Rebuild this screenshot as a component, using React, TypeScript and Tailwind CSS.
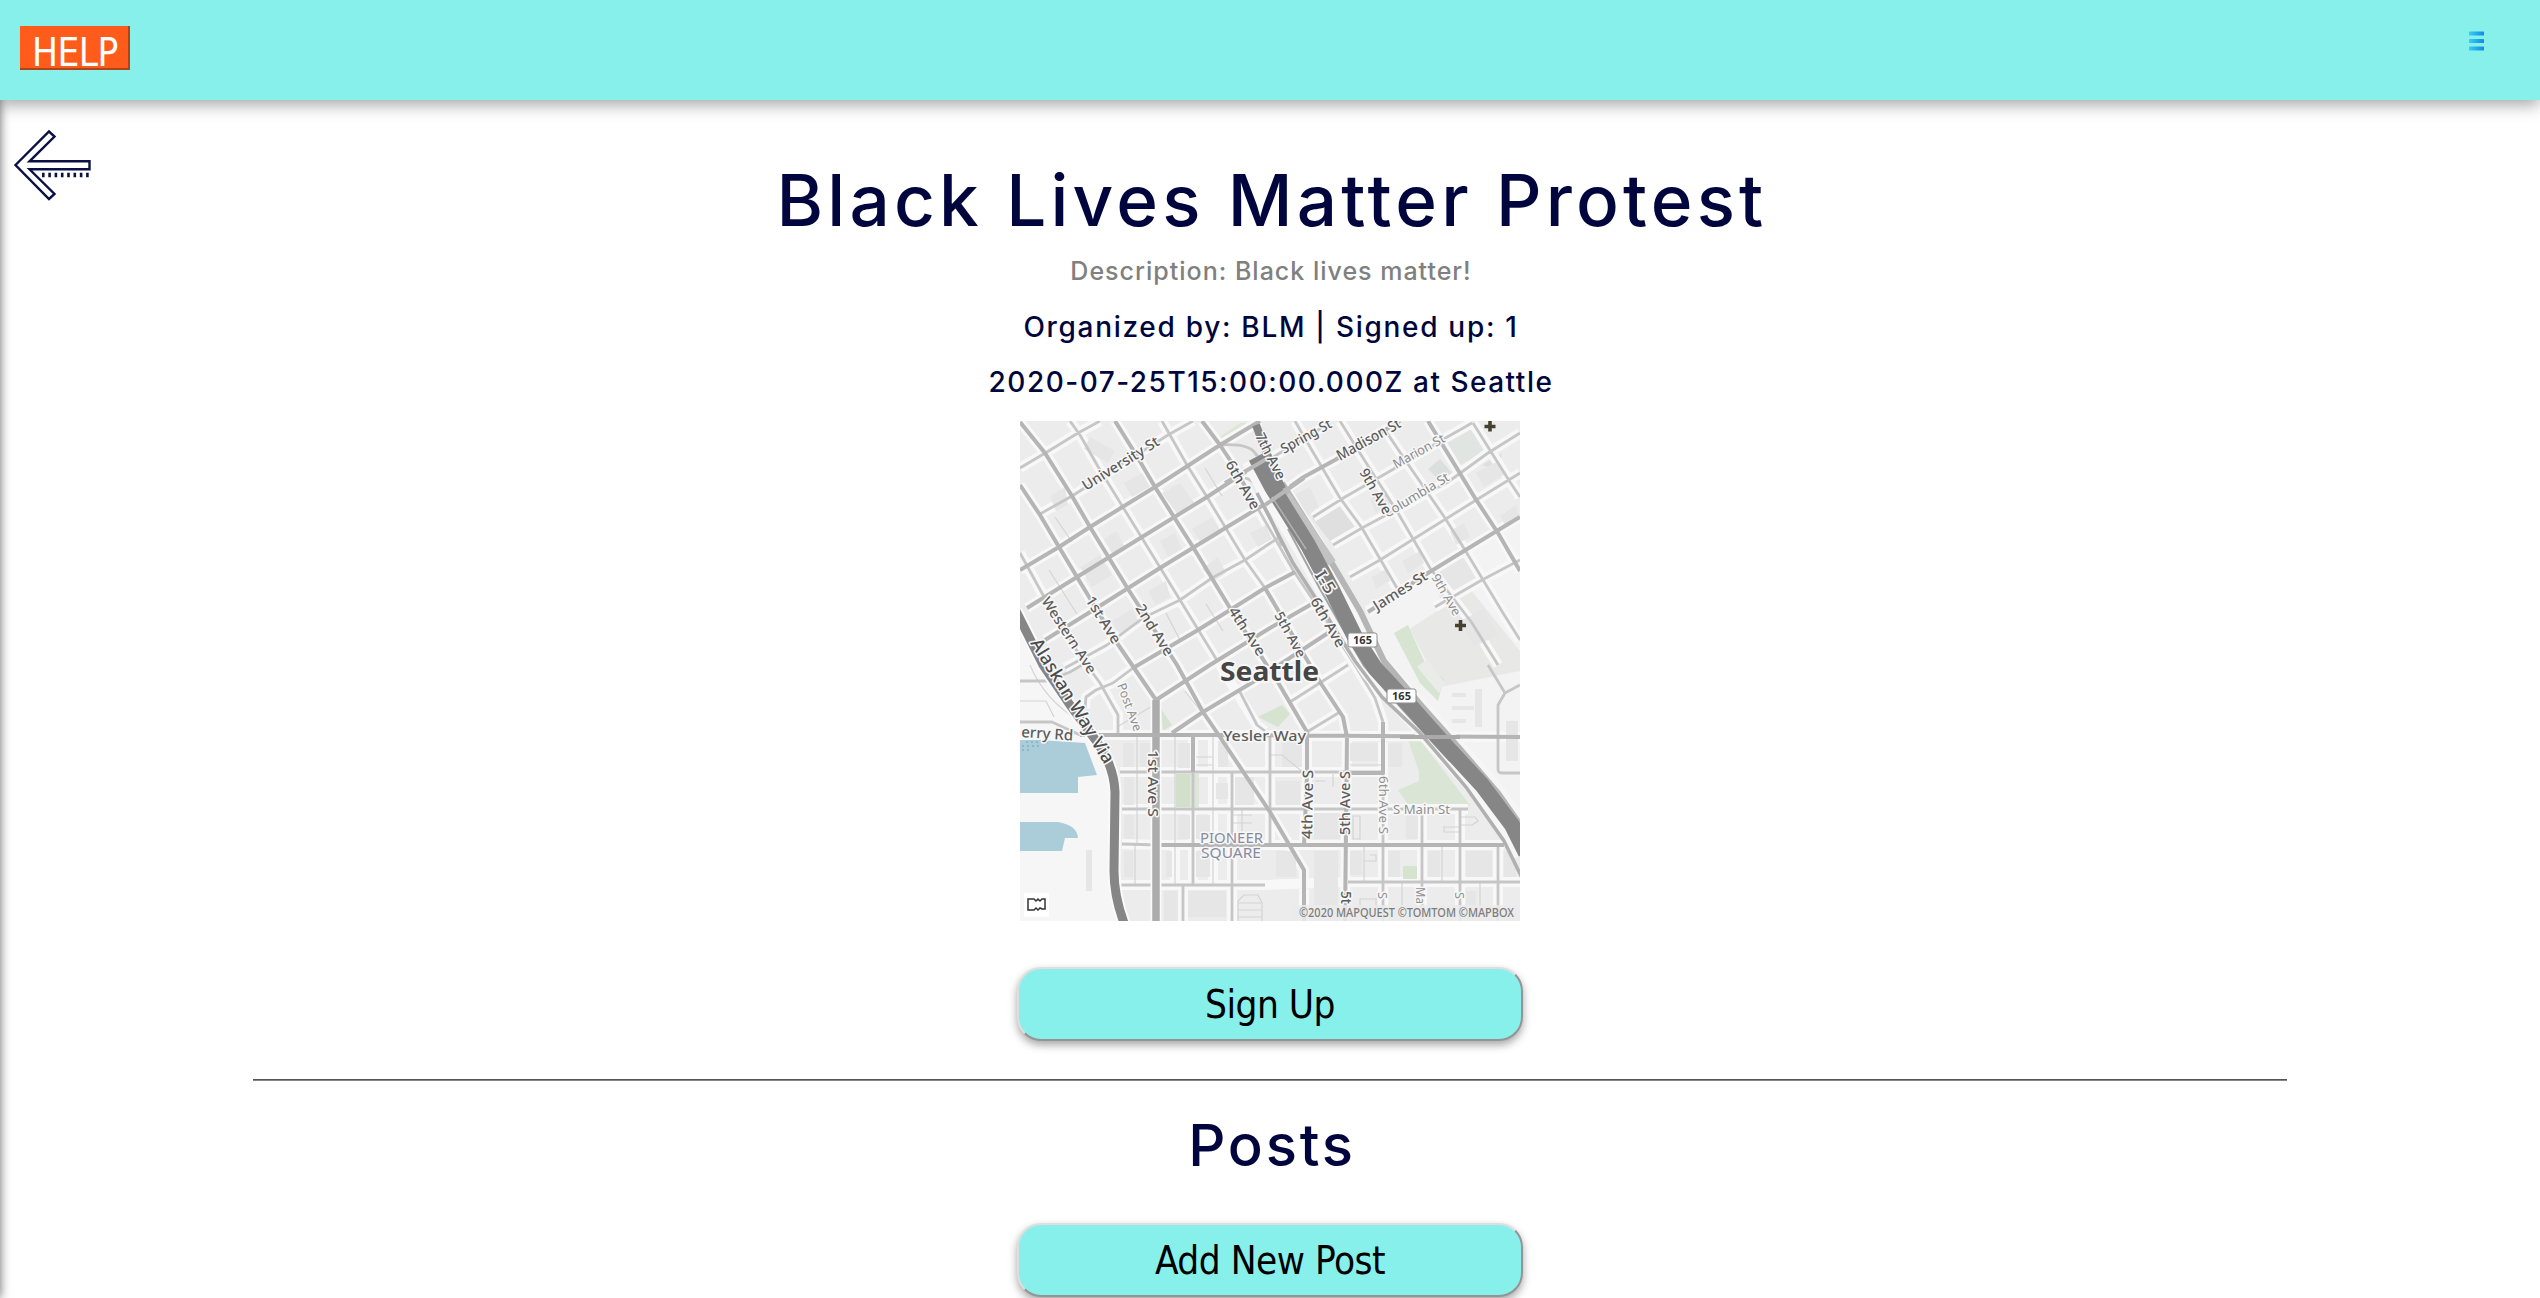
const casings = [
  // avenues, running down to the right
  "M0 1L25 32L52 75L70 106L108 168L157 244L183 291L200 316L250 391L284 449V500",
  "M0 64L20 94L39 126L57 156L97 222L136 279",
  "M50 0L60 14L80 49L122 117L160 179L198 241L237 304L245 310",
  "M95 0L115 32L135 66L173 126L210 187L259 263L287 311V354L284 424",
  "M142 0L167 44L187 76L225 139L245 167L300 261L323 296L327 316L325 500",
  "M182 0L200 24L210 39L237 86L273 149L295 182L335 244L355 277L363 301V352",
  "M0 132L23 174L60 235L80 262L98 294V314",
  "M275 0L290 26L320 77L342 107L377 167",
  "M320 0L338 29L378 92L410 147",
  "M410 147L452 202L478 244",
  "M365 9L392 49L425 97L445 129L483 192L500 219",
  "M408 0L455 77L478 112L500 150",
  "M453 2L468 26L490 61L500 76",
  // streets, running up to the right
  "M0 47L27 31L58 12L80 0",
  "M20 93L52 75L148 14L173 0",
  "M0 149L39 126L70 106L135 66L200 24L240 0",
  "M7 187L57 156L122 116L187 76L213 59L250 38L310 2",
  "M25 219L75 188L140 147L207 106L250 80L282 57L315 39L380 0",
  "M45 247L87 224L123 197L160 179L192 157L225 139L258 117",
  "M65 287L66 276L76 269L93 262L113 247L178 209L210 189L245 167L275 151",
  "M136 279L190 244L250 207L297 180",
  "M152 312L183 291L233 261L308 212",
  "M293 96L325 76L372 49L422 19L452 2",
  "M313 124L342 107L428 61L468 32L500 12",
  "M330 156L360 139L392 119L453 81L500 52",
  "M348 191L408 152L475 111L500 96",
  "M415 186L462 159L500 139",
  "M270 281L328 244",
  "M287 311L320 291",
  // the square grid of Pioneer Square
  "M60 314H200L500 316",
  "M100 351H363",
  "M102 388H448",
  "M102 423L140 424H484",
  "M100 464H245L325 461H500",
  "M155 424V464", "M173 316V464", "M193 316V464", "M212 351V500", "M250 316V424",
  "M363 352V500", "M402 388V500", "M440 388V500", "M478 424V500", "M163 464V500",
]

const majorRoads = [
  "M0 1L25 32L52 75L70 106L108 168L157 244L183 291L200 316L250 391L284 449V500",
  "M0 64L20 94L39 126L57 156L97 222L136 279",
  "M95 0L115 32L135 66L173 126L210 187L259 263L287 311V354L284 424",
  "M182 0L200 24L210 39L237 86",
  "M245 167L300 261L323 296L327 316L325 500",
  "M0 149L39 126L70 106L135 66L200 24L240 0",
  "M25 219L75 188L140 147L207 106L250 80L282 57L315 39L380 0",
  "M7 187L57 156L122 116L187 76L213 59",
  "M113 247L178 209L210 189L245 167L275 151",
  "M136 279L190 244L250 207L297 180",
  "M152 312L183 291L233 261L308 212",
  "M408 0L455 77L478 112L500 150",
  "M348 191L408 152L475 111L500 96",
  "M60 314H200L500 316",
  "M140 424H484",
  "M327 352H363V301",
  "M173 316V351",
]

const minorStreets = [
  "M50 0L60 14L80 49L122 117L160 179L198 241",
  "M220 271L237 304L245 310",
  "M142 0L167 44L187 76L225 139L245 167",
  "M237 86L273 149L295 182L335 244L355 277L363 301",
  "M0 132L23 174L60 235L80 262L98 294V314",
  "M275 0L290 26L320 77L342 107L377 167",
  "M320 0L338 29L378 92L410 147L452 202L478 244",
  "M365 9L392 49L425 97L445 129L483 192L500 219",
  "M453 2L468 26L490 61L500 76",
  "M0 47L27 31L58 12L80 0",
  "M20 93L52 75L148 14L173 0",
  "M213 59L250 38L310 2",
  "M45 247L87 224L123 197L160 179L192 157L225 139L258 117",
  "M65 287L66 276L76 269L93 262L113 247",
  "M293 96L325 76L372 49L422 19L452 2",
  "M313 124L342 107L428 61L468 32L500 12",
  "M330 156L360 139L392 119L453 81L500 52",
  "M415 186L462 159L500 139",
  "M270 281L328 244",
  "M287 311L320 291",
  "M100 351H363",
  "M102 388H448",
  "M102 423L140 424",
  "M100 464H245M328 461H500",
  "M173 351V464", "M212 351V500", "M250 316V424", "M163 464V500",
  "M363 352V500", "M402 388V500", "M440 388V500", "M478 424V500",
  "M0 260H28L50 251L62 244",
  "M0 301H32L60 314",
  "M468 244L485 272L500 264M485 272L478 284V348Q478 352 482 352H500",
  "M200 24Q228 22 235 32L245 44",
  "M225 57Q238 60 243 78L262 125",
]

const alleys = [
  "M29 149L57 193", "M35 96L52 121", "M185 47L202 75", "M186 183L203 210", "M146 192L160 219",
  "M117 316V424", "M155 316V464", "M193 316V464", "M10 244Q25 280 60 300", "M0 280H26L34 296",
  "M115 424V464", "M176 336H193M176 344H193", "M212 394H232M212 402H232M222 388V410",
  "M218 500V480L224 474H238L242 482V500M218 482H242M218 489H242M218 496H242",
  "M344 424V461", "M422 424V461", "M382 461V490", "M460 461V495", "M340 478H356V488H340Z",
  "M330 344H362", "M313 353V366M295 360H305", "M440 396H455L458 400L452 404H440M440 406H424V411H440",
  "M250 334H262L284 352", "M333 395H340V418H333Z", "M344 440H356V434H350", "M165 270L188 300", "M97 306L134 284",
]

const buildings = [
  "M70 16L95 30L88 42L64 28Z", "M104 62L122 52L130 66L112 76Z", "M30 75L45 66L48 84L36 90Z", "M84 118L96 110L106 128L94 136Z",
  "M142 72L160 62L176 84L158 94Z", "M140 120L155 112L162 128L148 136Z", "M172 108L192 96L202 112L182 124Z", "M182 148L198 136L206 152L194 160Z",
  "M60 146L80 134L92 154L72 166Z", "M92 200L112 188L120 202L100 214Z", "M128 170L146 160L150 176L136 184Z", "M230 112L246 104L252 118L238 126Z",
  "M276 73L290 66L299 86L286 96Z", "M350 78L366 70L372 82L356 92Z", "M382 140L400 130L404 142L388 152Z", "M430 110L444 102L450 116L436 124Z",
  "M352 156L366 148L370 160L356 168Z", "M456 52L478 40L484 54L464 66Z", "M480 95L496 84L500 98L486 106Z", "M440 200L464 188L478 214L454 226Z",
  "M103 322H114V346H103Z", "M120 322H130V346H120Z", "M158 322H170V347H158Z", "M198 320H208V346H198Z", "M104 356H114V384H104Z", "M196 362H208V378H196Z",
  "M104 394H114V418H104Z", "M158 394H170V418H158Z", "M176 394H190V418H176Z", "M104 430H113V456H104Z", "M146 430H152V456H146Z", "M176 430H190V456H176Z",
  "M168 470H206V496H168Z", "M144 470H158V500H144Z", "M256 360H280V384H256Z", "M294 392H320V418H294Z", "M294 430H318V484H294Z", "M330 430H342V454H330Z",
  "M368 430H380V456H368Z", "M408 430H420V456H408Z", "M446 430H472V456H446Z", "M368 322H382V346H368Z", "M330 322H358V340H330Z", "M262 320H282V346H262Z",
  "M386 394H398V418H386Z", "M446 470H456V486H446Z", "M484 430H496V456H484Z", "M66 429H72V470H66Z", "M215 356H234V384H215Z", "M256 430H276V456H256Z",
  "M486 300H498V340H486Z", "M432 272H446V276H432Z", "M432 285H454V289H432Z", "M432 298H446V302H432Z", "M455 268H462V306H455Z",
]

type Label = { text: string; x: number; y: number; rotate?: number; size: number; width: number; color?: string; weight?: number }

const labels: Label[] = [
  { text: "University St", x: 66, y: 70, rotate: -32, size: 14.5, width: 88 },
  { text: "6th Ave", x: 205, y: 43, rotate: 60, size: 14.5, width: 54 },
  { text: "7th Ave", x: 235, y: 15, rotate: 63, size: 14, width: 50 },
  { text: "Spring St", x: 264, y: 33, rotate: -29, size: 14, width: 56 },
  { text: "Madison St", x: 320, y: 40, rotate: -29, size: 15, width: 71 },
  { text: "Marion St", x: 376, y: 48, rotate: -29, size: 13, width: 57, color: "#8a8a8a", weight: 400 },
  { text: "Columbia St", x: 367, y: 97, rotate: -31, size: 13, width: 74, color: "#8a8a8a", weight: 400 },
  { text: "9th Ave", x: 339, y: 51, rotate: 60, size: 14, width: 50 },
  { text: "James St", x: 357, y: 190, rotate: -32, size: 14.5, width: 61 },
  { text: "9th Ave", x: 411, y: 156, rotate: 60, size: 12.5, width: 46, color: "#909090", weight: 400 },
  { text: "I-5", x: 294, y: 154, rotate: 58, size: 17, width: 24 },
  { text: "6th Ave", x: 290, y: 180, rotate: 60, size: 14.5, width: 55 },
  { text: "5th Ave", x: 254, y: 194, rotate: 61, size: 13.5, width: 50 },
  { text: "4th Ave", x: 208, y: 190, rotate: 57, size: 14.5, width: 55 },
  { text: "Western Ave", x: 21, y: 180, rotate: 57, size: 14, width: 88 },
  { text: "1st Ave", x: 65, y: 179, rotate: 58, size: 14.5, width: 53 },
  { text: "2nd Ave", x: 115, y: 187, rotate: 58, size: 14.5, width: 58 },
  { text: "Alaskan Way Via", x: 10, y: 222, rotate: 58.5, size: 18, width: 143, color: "#4c4c4c" },
  { text: "Post Ave", x: 97, y: 264, rotate: 70, size: 12.5, width: 50, color: "#909090", weight: 400 },
  { text: "erry Rd", x: 1, y: 316, rotate: 4, size: 15, width: 52 },
  { text: "Yesler Way", x: 203, y: 320, size: 14.5, width: 83 },
  { text: "1st Ave S", x: 128, y: 329, rotate: 90, size: 15, width: 67 },
  { text: "4th Ave S", x: 292, y: 418, rotate: -89, size: 14.5, width: 69 },
  { text: "5th Ave S", x: 330, y: 414, rotate: -90, size: 14.5, width: 64 },
  { text: "6th Ave S", x: 359, y: 355, rotate: 90, size: 13, width: 58, color: "#909090", weight: 400 },
  { text: "S Main St", x: 373, y: 393, size: 12.5, width: 57, color: "#909090", weight: 400 },
  { text: "5t", x: 321, y: 470, rotate: 90, size: 14, width: 13 },
  { text: "S", x: 358, y: 471, rotate: 90, size: 12.5, width: 7, color: "#909090", weight: 400 },
  { text: "Ma", x: 396, y: 466, rotate: 90, size: 12.5, width: 17, color: "#909090", weight: 400 },
  { text: "S", x: 435, y: 471, rotate: 90, size: 12.5, width: 7, color: "#909090", weight: 400 },
  { text: "PIONEER", x: 180, y: 422, size: 15, width: 63, color: "#888ba0", weight: 400 },
  { text: "SQUARE", x: 181, y: 437, size: 15, width: 60, color: "#888ba0", weight: 400 },
]

const shields = [
  { x: 328, y: 212 },
  { x: 367, y: 268 },
]

const freeway = "M236 36L252 66L288 124L312 169L335 216L355 247L392 287L425 324L462 364L492 404L506 432"

function SeattleMap() {
  return (
    <svg className="block size-[500px]" viewBox="0 0 500 500" fill="none" fontFamily="'Noto Sans', sans-serif">
      <rect width="500" height="500" fill="#ececec" />
      <path d="M0 196L25 240L90 340L96 500H0Z" fill="#f6f6f6" />
      <path d="M345 185L500 95V420L425 324L355 247Z" fill="#f3f3f3" />

      {/* Hospital and park areas */}
      <path d="M390 208L450 168L500 230V250L420 266Z" fill="#e8e8e7" />
      <path d="M292 97L325 77L340 104L312 123Z" fill="#dfdfdf" />
      <path d="M415 152L444 136L460 158L420 178Z" fill="#e6e6e6" />
      <path d="M408 48L420 38L432 52L424 64Z" fill="#dce0dc" />
      <path d="M424 22L450 8L468 30L440 44Z" fill="#e1e5e1" />
      <path d="M482 32L478 50L462 44Z" fill="#dbe2db" />
      <path d="M374 212L388 204L406 244L424 258L418 280L400 262Z" fill="#d7e4d1" />
      <path d="M397 246L407 238L425 262L419 272Z" fill="#eaece9" />
      <path d="M388 319L400 319L450 384L440 389H392L378 369L399 360V350Z" fill="#dae5d6" />
      <path d="M141 288L152 304L143 310Z" fill="#d6e3d0" />
      <path d="M238 296L262 284L270 293L258 306Z" fill="#d6e3d0" />
      <path d="M198 17L220 2H238L200 22Z" fill="#dce7d8" />

      {/* Elliott Bay piers */}
      <path d="M0 319L20 319L65 322L77 354L58 356V372H0Z" fill="#abcdda" />
      <path d="M0 401H38Q57 404 58 417L45 417L42 430H0Z" fill="#abcdda" />
      <path d="M2 325H20M6 321H30M2 329H10" stroke="#7fb0c8" strokeWidth="1.5" strokeDasharray="2 3" />

      <path d={casings.join("")} stroke="#f8f8f8" strokeWidth="10" strokeLinejoin="round" />
      <path d={buildings.join("")} fill="#e6e6e6" />
      <path d="M156 353H179V386H156Z" fill="#dde6d9" />
      <path d="M156 353H170V386H156Z" fill="#d2e0cb" />
      <path d="M383 445H397V458H383Z" fill="#d5e3cf" />
      <path d={alleys.join("")} stroke="#d4d4d4" strokeWidth="1.2" />
      <path d={minorStreets.join("")} stroke="#c6c6c6" strokeWidth="2.8" strokeLinejoin="round" />
      <path d={majorRoads.join("")} stroke="#b5b5b5" strokeWidth="4" strokeLinejoin="round" />
      <path d="M136 279V500" stroke="#fafafa" strokeWidth="11" />
      <path d="M136 279V500" stroke="#acacac" strokeWidth="7.5" />
      <path d="M100 314H170" stroke="#b0b0b0" strokeWidth="4" />

      {/* Alaskan Way viaduct */}
      <path d="M-4 190L23 244L50 284L77 321Q94 345 95 371L94 450Q94 475 104 502" stroke="#fafafa" strokeWidth="13" />
      <path d="M-4 190L23 244L50 284L77 321Q94 345 95 371L94 450Q94 475 104 502" stroke="#868686" strokeWidth="9" />

      {/* Interstate 5 and its ramps */}
      <path d={freeway} stroke="#f6f6f6" strokeWidth="31" strokeLinejoin="round" />
      <path d="M262 62L300 122L340 190L364 240L400 283L440 328L478 372L506 412" stroke="#b5b5b5" strokeWidth="6" />
      <path d="M266 74L312 142" stroke="#c2c2c2" strokeWidth="9" />
      <path d="M237 72L273 142L300 184L335 240L362 276L400 312L446 366L484 420L506 465" stroke="#b0b0b0" strokeWidth="3.5" />
      <path d="M268 108L300 168L344 245L384 290L430 340" stroke="#a5a5a5" strokeWidth="2" />
      <path d="M236 4L252 46L262 68" stroke="#868686" strokeWidth="8" />
      <path d={freeway} stroke="#868686" strokeWidth="16" strokeLinejoin="round" />
      <path d="M252 76L286 128" stroke="#b0b0b0" strokeWidth="1.5" />
      <path d="M205 62L250 36M245 84L284 57" stroke="#b7b7b7" strokeWidth="4" />
      <path d="M380 316H440" stroke="#aaaaaa" strokeWidth="4" />

      {labels.map((label, i) => (
        <text
          key={i}
          x={label.x}
          y={label.y}
          transform={`rotate(${label.rotate ?? 0} ${label.x} ${label.y})`}
          fontSize={label.size}
          fontWeight={label.weight ?? 500}
          textLength={label.width}
          lengthAdjust="spacingAndGlyphs"
          fill={label.color ?? "#5c5c5c"}
          stroke="#f7f7f7"
          strokeWidth="3"
          strokeLinejoin="round"
          paintOrder="stroke"
        >
          {label.text}
        </text>
      ))}
      <text x="200" y="260" fontSize="27" fontWeight="700" textLength="99" lengthAdjust="spacingAndGlyphs" fill="#454545" stroke="#f7f7f7" strokeWidth="4" paintOrder="stroke">
        Seattle
      </text>

      {shields.map((shield) => (
        <g key={shield.x}>
          <rect x={shield.x} y={shield.y} width="29" height="14" rx="2" fill="#fff" stroke="#8d8d8d" />
          <text x={shield.x + 5} y={shield.y + 11} fontSize="11" fontWeight="700" textLength="19" fill="#333">
            165
          </text>
        </g>
      ))}
      <path d="M470 0V10.500M464.500 5.500H475.500M440.500 199V210M435 204.500H446" stroke="#46402f" strokeWidth="3.600" />

      {/* Provider mark and attribution */}
      <rect x="4" y="472" width="25" height="24" fill="#fff" />
      <path d="M8 478H14L16 480L18 478L20 480L22 478H25V488H22L20 487L18 489L16 487L14 489H8Z" stroke="#333" strokeWidth="1.500" />
      <rect x="272" y="484" width="228" height="16" fill="#ebebeb" fillOpacity=".85" />
      <text x="279" y="496" fontSize="12.500" fontWeight="500" textLength="215" lengthAdjust="spacingAndGlyphs" fill="#7c7c7c">
        ©2020 MAPQUEST ©TOMTOM ©MAPBOX
      </text>
    </svg>
  )
}

function BackArrow() {
  return (
    <svg className="h-[72px] w-[78px]" viewBox="14 129 78 72" fill="none" stroke="#0a1045" strokeWidth="2.4">
      <path d="M15.500 165L49 131.500L54.500 136.500L29.500 161.300H89.500V169.300H29.500L54.500 194L49 199L15.500 165Z" />
      <path d="M42 175H89" strokeWidth="4.500" strokeDasharray="2.600 3.700" />
    </svg>
  )
}

function MenuIcon() {
  return (
    <svg className="h-5 w-[15px]" viewBox="0 0 15 20">
      <defs>
        <linearGradient id="menu-bar">
          <stop stopColor="#35cdfb" />
          <stop offset="1" stopColor="#1689dc" />
        </linearGradient>
      </defs>
      <rect y="0.500" width="15" height="4" rx="0.500" fill="url(#menu-bar)" />
      <rect y="8" width="15" height="4" rx="0.500" fill="url(#menu-bar)" />
      <rect y="15.500" width="15" height="4" rx="0.500" fill="url(#menu-bar)" />
    </svg>
  )
}

function ActionButton({ children }: { children: string }) {
  return (
    <button className="h-[74px] w-[506px] rounded-[24px] border-2 border-t-[#dedede] border-l-[#dedede] border-r-[#949494] border-b-[#949494] bg-[#88f0ea] pt-0.5 font-['DejaVu_Sans_Condensed','DejaVu_Sans',sans-serif] text-[38.4px] leading-none font-stretch-condensed tracking-[-0.5px] text-black shadow-[0_4px_8px_rgba(0,0,0,0.35)]">
      {children}
    </button>
  )
}

export default function App() {
  return (
    <div className="relative h-[1298px] w-full overflow-hidden bg-white font-['Inter',sans-serif] font-medium text-[#00063d]">
      {/* Closed side drawer, only its shadow shows */}
      <div className="absolute inset-y-0 -left-10 w-10 shadow-[0_0_10px_rgba(0,0,0,0.6)]" />

      {/* Header */}
      <header className="relative flex h-[100px] items-start justify-between bg-[#88f0ea] pl-5 pr-14 shadow-[0_5px_15px_rgba(0,0,0,0.35)]">
        <button className="mt-[26px] h-11 w-[110px] border-r-2 border-b-2 border-[#b04318] bg-[#ff5c1c] pt-[11px] pl-0.5 font-['DejaVu_Sans_Condensed','DejaVu_Sans',sans-serif] text-[38.4px] leading-[32px] font-normal font-stretch-condensed tracking-[-0.5px] text-white">
          HELP
        </button>
        <button className="mt-[31px]">
          <MenuIcon />
        </button>
      </header>

      <button className="absolute top-[129px] left-[14px]">
        <BackArrow />
      </button>

      {/* Event details */}
      <main className="flex flex-col items-center whitespace-nowrap">
        <h1 className="mt-[55px] mb-px pl-1 text-[71px] leading-[90px] tracking-[4.2px]">Black Lives Matter Protest</h1>
        <p className="mt-[9px] mb-px pl-0.5 text-[25px] leading-[32px] tracking-[1px] text-[#808080]">Description: Black lives matter!</p>
        <p className="mt-[23px] mb-px pl-0.5 text-[28px] leading-[32px] tracking-[1.7px]">Organized by: BLM | Signed up: 1</p>
        <p className="mt-[22px] pl-0.5 text-[28px] leading-[32px] tracking-[1.5px]">2020-07-25T15:00:00.000Z at Seattle</p>
        <div className="mt-[23px] mb-[46px]">
          <SeattleMap />
        </div>
        <ActionButton>Sign Up</ActionButton>
        <hr className="mt-[38px] h-0.5 w-[2034px] border-t border-b border-t-[#555] border-b-[#858585]" />

        {/* Posts */}
        <h2 className="mt-[29px] mb-[43px] pl-1 text-[58px] leading-[70px] tracking-[2.8px]">Posts</h2>
        <ActionButton>Add New Post</ActionButton>
      </main>
    </div>
  )
}
